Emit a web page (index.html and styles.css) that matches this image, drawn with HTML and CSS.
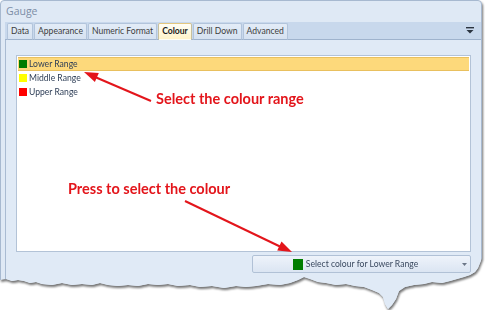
FILE: index.html
```html
<!DOCTYPE html>
<html lang="en">
<head>
  <meta charset="UTF-8" />
  <title>Gauge - Colour</title>
  <link rel="stylesheet" href="styles.css">
</head>
<body>
  <div class="paper">
    <div class="window">
      <div class="title">Gauge</div>
      <div class="tabstrip">
        <div class="tab">Data</div>
        <div class="tab">Appearance</div>
        <div class="tab">Numeric Format</div>
        <div class="tab active">Colour</div>
        <div class="tab">Drill Down</div>
        <div class="tab">Advanced</div>
        <svg class="strip-menu" width="8" height="7" viewBox="0 0 8 7">
          <rect x="0" y="0" width="8" height="1.4" fill="#2b3440"/>
          <polygon points="0.5,3 7.5,3 4,6.6" fill="#2b3440"/>
        </svg>
      </div>
      <div class="page">
        <ul class="range-list">
          <li class="range selected"><span class="swatch green"></span>Lower Range</li>
          <li class="range"><span class="swatch yellow"></span>Middle Range</li>
          <li class="range"><span class="swatch red"></span>Upper Range</li>
        </ul>
        <div class="button-row">
          <button class="colour-btn">
            <span class="btn-label"><span class="swatch big green"></span>Select colour for Lower Range</span>
            <span class="btn-arrow">
              <svg width="5" height="3" viewBox="0 0 5 3"><polygon points="0,0 5,0 2.5,3" fill="#6b7687"/></svg>
            </span>
          </button>
        </div>
      </div>
    </div>
  </div>

  <div class="callout callout-range">Select the colour range</div>
  <div class="callout callout-press">Press to select the colour</div>

  <svg class="arrows" width="487" height="310" viewBox="0 0 487 310">
    <line x1="151" y1="101" x2="95" y2="77" stroke="#e3151b" stroke-width="2"/>
    <polygon points="84,72 98.8,73 94.9,82.1" fill="#e3151b"/>
    <line x1="185" y1="201" x2="281" y2="247" stroke="#e3151b" stroke-width="2"/>
    <polygon points="292,252 277.2,250.5 281.5,241.5" fill="#e3151b"/>
  </svg>
</body>
</html>
```

FILE: styles.css
```css
body {
  margin: 0;
  background: #ffffff;
  font-family: Lato, sans-serif;
  font-size: 8.6px;
  color: #3a3a3a;
  position: relative;
  width: 487px;
  height: 310px;
  overflow: hidden;
}

.paper {
  filter: drop-shadow(1px 2px 1px rgba(0,0,0,0.55));
}

.window {
  width: 480px;
  height: 309px;
  background: #dfe9f5;
  border: 1px solid #a7b9d0;
  border-radius: 4px 4px 0 0;
  clip-path: polygon(0 0, 482px 0, 482px 258px, 480px 263px, 478px 268px, 475px 272px,
    470px 275px, 464px 277px, 457px 279px, 450px 281px, 442px 283px, 432px 282px, 424px 284px,
    414px 285px, 405px 287px, 399px 291px, 396px 299px, 392px 305px, 388px 309px, 385px 304px,
    383px 297px, 379px 293px, 372px 290px, 364px 287px, 355px 286px, 346px 284px, 336px 285px,
    326px 283px, 318px 282px, 310px 279px, 304px 277px, 298px 280px, 290px 283px, 280px 285px,
    268px 284px, 256px 286px, 246px 287px, 236px 286px, 224px 288px, 212px 286px, 200px 287px,
    190px 285px, 178px 286px, 168px 284px, 158px 285px, 148px 284px, 138px 286px, 128px 285px,
    118px 286px, 108px 285px, 100px 283px, 92px 285px, 82px 284px, 72px 285px, 62px 283px,
    52px 285px, 42px 284px, 36px 282px, 30px 283px, 24px 281px, 18px 280px, 12px 281px,
    6px 279px, 0 280px);
}

.title {
  height: 21px;
  line-height: 20px;
  padding-left: 5px;
  font-family: "Open Sans", sans-serif;
  font-size: 10.5px;
  color: #7c8da5;
}

.tabstrip {
  display: flex;
  align-items: flex-end;
  gap: 1px;
  height: 17px;
  margin-left: 4px;
  padding-left: 2px;
  background: #c8d8ec;
  border-bottom: 1px solid #9fb3cd;
}

.tab {
  height: 15px;
  line-height: 15px;
  padding: 0 3px;
  margin-bottom: -1px;
  background: linear-gradient(#e3ecf7, #d6e2f1);
  border: 1px solid #b2c4db;
  border-bottom-color: #9fb3cd;
  border-radius: 2px 2px 0 0;
  color: #3d3d3d;
}

.tab.active {
  font-weight: bold;
  color: #1a1a1a;
  background: linear-gradient(#fffef6, #fff3c9);
  border-color: #e3c77f #c7c09e transparent;
}

.strip-menu {
  margin-left: auto;
  margin-right: 7px;
  align-self: center;
}

.page {
  margin-left: 4px;
  border-left: 1px solid #a9bbd2;
  padding: 15px 10px 0 10px;
  height: 260px;
  background: #e0eaf6;
}

.range-list {
  list-style: none;
  margin: 0;
  padding: 1px;
  height: 193px;
  background: #ffffff;
  border: 1px solid #b3c3d7;
}

.range {
  display: flex;
  align-items: center;
  gap: 2px;
  height: 14px;
  padding-left: 1px;
  color: #2e3e57;
}

.range.selected {
  background: #fdd97b;
  border-top: 1px solid #e9c05e;
  border-bottom: 1px solid #e9c05e;
  height: 12px;
}

.swatch {
  width: 8px;
  height: 8px;
  flex: none;
}

.swatch.big {
  width: 10px;
  height: 11px;
}

.green { background: #007d00; }
.yellow { background: #ffff00; }
.red { background: #ff0000; }

.button-row {
  display: flex;
  justify-content: flex-end;
  margin-top: 3px;
}

.colour-btn {
  display: flex;
  align-items: center;
  width: 219px;
  height: 18px;
  padding: 0;
  font-family: Lato, sans-serif;
  font-size: 8.6px;
  color: #3b4a60;
  background: linear-gradient(#eef3fa, #dbe5f2);
  border: 1px solid #b1c1d6;
  border-radius: 2px;
}

.btn-label {
  flex: 1;
  display: flex;
  align-items: center;
  justify-content: center;
  gap: 3px;
}

.btn-arrow {
  width: 12px;
  display: flex;
  justify-content: center;
}

.callout {
  position: absolute;
  font-family: Lato, sans-serif;
  font-weight: bold;
  font-size: 14.5px;
  color: #e3151b;
  white-space: nowrap;
}

.callout-range {
  left: 156px;
  top: 90px;
}

.callout-press {
  left: 68px;
  top: 180px;
}

.arrows {
  position: absolute;
  left: 0;
  top: 0;
  pointer-events: none;
}
```
